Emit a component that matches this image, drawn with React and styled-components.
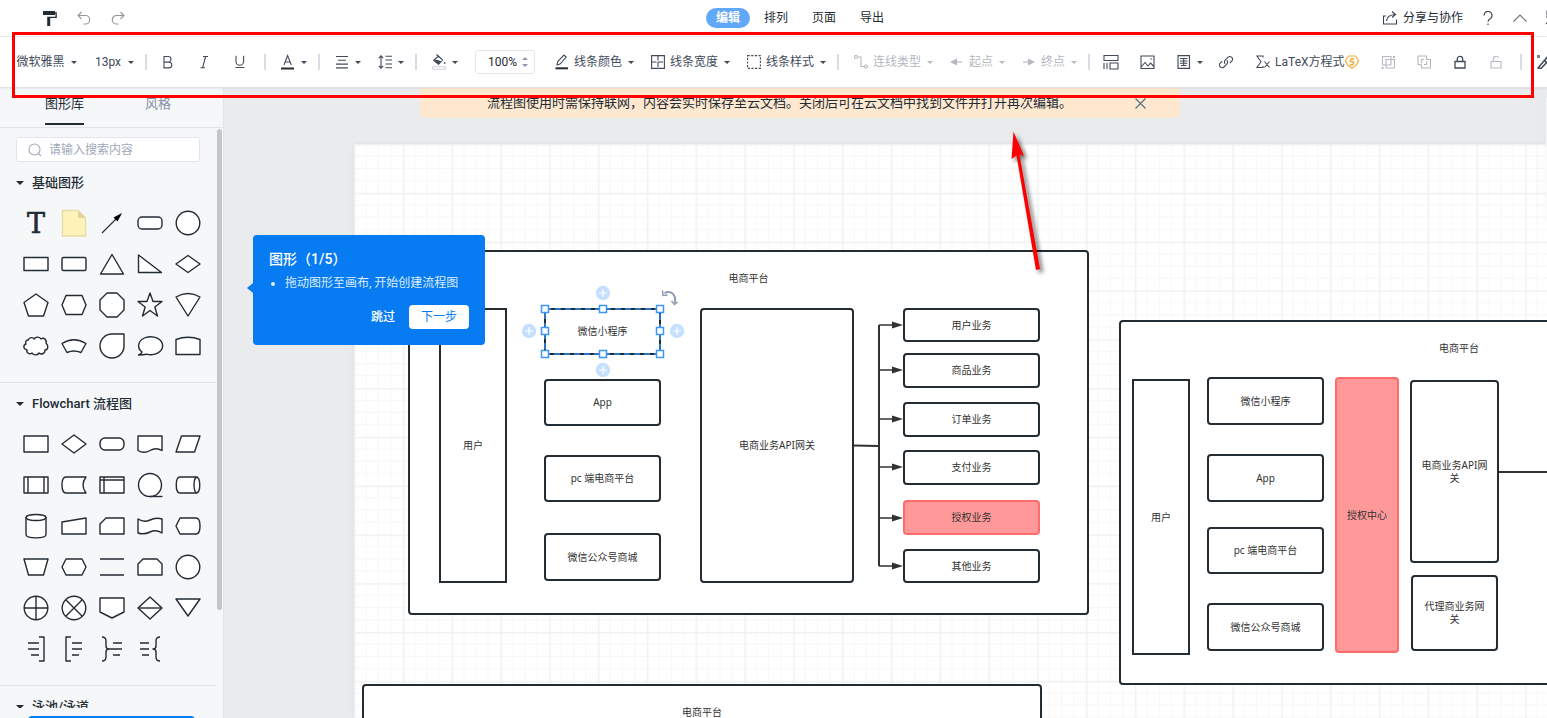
import React, { useState } from 'react'
import styled, { createGlobalStyle, css } from 'styled-components'

const GlobalStyle = createGlobalStyle`
  * {
    box-sizing: border-box;
  }
  body {
    margin: 0;
    overflow: hidden;
    background: #fff;
    color: #232b33;
    font: 12px/20px Roboto, 'Noto Sans CJK SC', sans-serif;
  }
  button, input, select {
    margin: 0;
    padding: 0;
    border: none;
    background: none;
    color: inherit;
    font: inherit;
  }
  button {
    cursor: pointer;
  }
  svg {
    display: block;
    flex: none;
  }
`

/* ---------- layout ---------- */

const Screen = styled.div`
  position: relative;
  display: flex;
  flex-direction: column;
  height: 100vh;
  overflow: hidden;
`
const Header = styled.header`
  display: flex;
  align-items: center;
  height: 37px;
  padding-left: 43px;
  border-bottom: 1px solid #ececef;
`
const HeaderLeft = styled.div`
  display: flex;
  flex: 1 1 0;
  align-items: center;
  gap: 20px;
`
const HeaderRight = styled.div`
  display: flex;
  flex: 1 1 0;
  align-items: center;
  justify-content: flex-end;
  gap: 18px;
  margin-right: -14px;
`
const MenuTabs = styled.nav`
  display: flex;
  gap: 4px;
  margin: 0 14px 0 10px;
`
const MenuTab = styled.button`
  width: 44px;
  height: 20px;
  border-radius: 10px;
  ${props => props.$active && css`
    background: #62a8f8;
    color: #fff;
    font-weight: 700;
  `}
`
const HeaderButton = styled.button`
  display: flex;
  align-items: center;
  gap: 5px;
`
const Toolbar = styled.div`
  position: relative;
  z-index: 2;
  display: flex;
  flex: none;
  align-items: center;
  height: 51px;
  padding-left: 8px;
  border-bottom: 1px solid #dfe2e5;
  background: #fff;
  color: #414a5a;
  white-space: nowrap;
  box-shadow: 0 1px 2px rgba(0, 0, 0, 0.06);
`
const Body = styled.div`
  display: flex;
  flex: 1;
  min-height: 0;
`

/* ---------- toolbar parts ---------- */

const toolStyles = css`
  display: flex;
  flex: none;
  align-items: center;
  gap: 5px;
  height: 28px;
  padding: 0 9px 0 8px;
  color: ${props => (props.$muted ? '#b4b8bf' : 'inherit')};
`
const Tool = styled.button`
  ${toolStyles}
`
const SelectTool = styled.label`
  ${toolStyles}
`
const NativeSelect = styled.select`
  min-width: ${props => props.$min}px;
  appearance: none;
  text-align: center;
  outline: none;
`
const IconButton = styled.button`
  display: flex;
  flex: none;
  align-items: center;
  justify-content: center;
  width: 28px;
  height: 28px;
  margin-right: 8px;
  color: ${props => (props.$muted ? '#b4b8bf' : 'inherit')};
`
const Separator = styled.span`
  flex: none;
  width: 2px;
  height: 16px;
  margin: 0 7px 0 2px;
  background: #d9dde3;
`
const Arrow = styled.i`
  flex: none;
  margin-left: 1px;
  border: 3px solid transparent;
  border-top-color: currentColor;
  border-bottom: none;
`
const ZoomBox = styled.label`
  display: flex;
  flex: none;
  align-items: center;
  justify-content: flex-end;
  gap: 5px;
  width: 60px;
  height: 24px;
  margin: 0 12px 0 8px;
  padding-right: 6px;
  border: 1px solid #e3e6ec;
  border-radius: 3px;
  color: #232b33;
`
const ZoomInput = styled.input`
  width: 36px;
  text-align: right;
  outline: none;
`
const LatexLabel = styled.span`
  display: flex;
  align-items: center;
  margin-right: 6px;
`

/* ---------- sidebar ---------- */

const Sidebar = styled.aside`
  display: flex;
  flex: none;
  flex-direction: column;
  width: 224px;
  border-right: 1px solid #e1e4e8;
  background: #f5f7f9;
`
const SideTabs = styled.div`
  display: flex;
  gap: 61px;
  height: 40px;
  padding: 0 45px;
  border-bottom: 1px solid #dfe3e8;
`
const SideTab = styled.button`
  height: 37px;
  padding-bottom: 4px;
  border-bottom: 2px solid ${props => (props.$active ? '#232b33' : 'transparent')};
  color: ${props => (props.$active ? '#232b33' : '#8592a6')};
  font-size: 13px;
`
const ShapeList = styled.div`
  position: relative;
  flex: 1;
  min-height: 0;
  padding-right: 7px;
  overflow: hidden;
`
const ScrollThumb = styled.div`
  position: absolute;
  top: 1px;
  right: 1px;
  width: 5px;
  height: 83%;
  border-radius: 3px;
  background: #c6c6c6;
`
const SearchBox = styled.label`
  display: flex;
  align-items: center;
  gap: 7px;
  height: 25px;
  margin: 9px 16px 0;
  padding: 0 11px;
  border: 1px solid #e1e6ee;
  border-radius: 3px;
  background: #fff;
  color: #a0a9ba;
`
const SearchInput = styled.input`
  flex: 1;
  min-width: 0;
  outline: none;
  &::placeholder {
    color: #a0a9ba;
  }
`
const Section = styled.section`
  padding: 11px 0 16px;
  border-bottom: 1px solid #dfe2e7;
`
const SectionTitle = styled.button`
  display: flex;
  align-items: center;
  gap: 8px;
  height: 20px;
  margin-left: 16px;
  font-size: 13px;
  font-weight: 500;
`
const SectionArrow = styled.i`
  border: 4px solid transparent;
  border-top-color: #232b33;
  border-bottom: none;
`
const ShapeGrid = styled.div`
  display: grid;
  grid-template-columns: repeat(5, 38px);
  grid-auto-rows: 41px;
  margin: 9px 0 0 17px;
`
const ShapeButton = styled.button`
  display: flex;
  align-items: center;
  justify-content: center;
`
const ShapeSvg = styled.svg`
  overflow: visible;
`
const SideFooter = styled.div`
  flex: none;
  height: 10px;
  padding: 8px 28px 0;
  overflow: hidden;
`
const MoreButton = styled.button`
  display: block;
  width: 100%;
  height: 28px;
  border-radius: 4px;
  background: #077bf1;
`

/* ---------- workspace ---------- */

const Workspace = styled.main`
  position: relative;
  flex: 1;
  min-width: 0;
  padding: 56px 0 0 130px;
  background: #e9ebed;
  overflow: hidden;
`
const Page = styled.div`
  position: relative;
  height: 100%;
  background: #fff;
  box-shadow: 0 0 5px rgba(0, 0, 0, 0.06);
`
const Overlay = styled.svg`
  position: absolute;
  top: 0;
  left: 0;
  width: 100%;
  height: 100%;
  pointer-events: none;
`
const Node = styled.div`
  position: absolute;
  left: ${props => props.$x}px;
  top: ${props => props.$y}px;
  display: flex;
  align-items: ${props => (props.$frame ? 'flex-start' : 'center')};
  justify-content: center;
  width: ${props => props.$w}px;
  height: ${props => props.$h}px;
  padding: ${props => (props.$frame ? '20px 0 0' : '0 8px')};
  border: 2px solid ${props => (props.$red ? '#ff6a6a' : '#232b33')};
  border-radius: ${props => (props.$square ? 0 : 4)}px;
  background: ${props => (props.$red ? '#ff9999' : '#fff')};
  color: #323232;
  font: 10px/13px 'Noto Sans', 'Noto Sans CJK SC', sans-serif;
  text-align: center;
`
const Banner = styled.div`
  position: absolute;
  top: 0;
  left: 196px;
  display: flex;
  align-items: center;
  justify-content: space-between;
  width: 760px;
  height: 30px;
  padding: 0 34px 0 67px;
  border-radius: 0 0 4px 4px;
  background: #fee8d0;
  font-size: 13px;
  white-space: nowrap;
`
const CloseButton = styled.button`
  color: #4b7080;
`
const Dock = styled.div`
  position: absolute;
  top: 10px;
  right: 0;
  width: 1px;
  height: 122px;
  background: #f8f9fb;
  box-shadow: 0 0 14px rgba(60, 70, 110, 0.18);
`
const Guide = styled.div`
  position: absolute;
  top: 147px;
  left: 29px;
  width: 232px;
  height: 110px;
  padding: 14px 16px 16px;
  border-radius: 4px;
  background: #077bf1;
  color: #fff;
  &::before {
    content: '';
    position: absolute;
    top: 48px;
    left: -6px;
    border: 5px solid transparent;
    border-right: 6px solid #077bf1;
    border-left: none;
  }
`
const GuideTitle = styled.h2`
  margin: 0;
  font-size: 14px;
  font-weight: 500;
  line-height: 20px;
`
const GuideList = styled.ul`
  margin: 4px 0 12px;
  padding-left: 16px;
  color: #dcecfd;
`
const GuideActions = styled.div`
  display: flex;
  justify-content: flex-end;
  gap: 14px;
`
const SkipButton = styled.button`
  font-weight: 500;
`
const NextButton = styled.button`
  width: 60px;
  height: 24px;
  border-radius: 4px;
  background: #fff;
  color: #077bf1;
`

/* ---------- markup over the screen ---------- */

const MarkFrame = styled.div`
  position: absolute;
  z-index: 3;
  top: 32px;
  right: 13px;
  left: 12px;
  height: 66px;
  border: 3px solid #ff0000;
  pointer-events: none;
`
const MarkArrow = styled.svg`
  position: absolute;
  z-index: 3;
  top: 120px;
  left: 1000px;
  pointer-events: none;
  filter: drop-shadow(3px 3px 2px rgba(0, 0, 0, 0.55));
`

const Icon = ({ size = 14, children, ...rest }) => (
  <svg
    width={size}
    height={size}
    viewBox={`0 0 ${size} ${size}`}
    fill="none"
    stroke="currentColor"
    strokeWidth="1.1"
    aria-hidden="true"
    {...rest}
  >
    {children}
  </svg>
)

const icons = {
  bold: <path d="M3 1.5h4.2a2.8 2.8 0 0 1 0 5.6H3zM3 7.1h4.9a2.9 2.9 0 0 1 0 5.8H3z" />,
  italic: <path d="M6 1.5h5M3.5 12.8h4.500M8.600 1.500l-3 11.300" />,
  underline: <path d="M3 .8v5.700a3.800 3.800 0 0 0 7.600 0V.8M2.500 12.500h8.800" />,
  align: <path d="M1 1.500h12M3 5.300h8M1 9.100h12M1 12.900h12" />,
  layout: <path d="M1 1.500h14v5H1zM1 9v6M4 9v6M7 9h8v6H7z" />,
  image: <path d="M1 1h13v12.500H1zM1.500 11.500l3.500-4 3 3.500 2.500-3 3.500 3.500M10.500 4h1.500" />,
  link: (
    <path d="M6.200 8.800a2.600 2.600 0 0 1 0-3.700l2.900-2.900a2.700 2.700 0 0 1 3.800 3.800l-2 2M7.800 5.400a2.600 2.600 0 0 1 0 3.700l-2.900 2.900a2.700 2.700 0 0 1-3.800-3.800l2-2" />
  ),
  group: (
    <>
      <path d="M1.500 1.500h8.500v8.500H1.500zM5 4.500h8.500V13H5z" />
      <path d="M12 1h2v2h-2zM.500 12h2v2h-2z" fill="currentColor" stroke="none" />
    </>
  ),
  ungroup: <path d="M4.500 9.500H1V1h8.500v3.500M4.500 8V4.500H7M9 4.500h4.500V13h-9v-3M9.500 6.500v3H7" />,
  lock: <path d="M2 6.500h10V13H2zM4.300 6.500V4a2.700 2.700 0 0 1 5.400 0v2.500" strokeWidth="1.3" />,
  unlock: <path d="M2 6.500h10V13H2zM4.300 6.500V4a2.700 2.700 0 0 1 5.200-1" />
}

const stroke = { fill: '#fff', stroke: '#232b33', strokeWidth: 1.4, strokeLinejoin: 'round' }

// every shape is drawn around its own centre
const basicShapes = [
  ['文本', <text y="10" textAnchor="middle" fontFamily="DejaVu Serif" fontSize="27" fill="#232b33" strokeWidth="0.6">T</text>],
  ['便签', <><path d="M-11.500-12.500H4L11.500-5v18h-23z" fill="#fff3b9" stroke="#e8dca6" /><path d="M4-12.500V-5h7.500z" fill="#e3d39a" stroke="none" /></>],
  ['箭头', <><path d="M-10 10L5-5" strokeWidth="1.1" /><path d="M10-10L1.500-5.500L5.500-1.500z" fill="#000" stroke="none" /></>],
  ['圆角矩形', <rect x="-12" y="-6" width="24" height="12" rx="4" />],
  ['圆形', <circle r="11.8" />],
  ['矩形', <rect x="-12" y="-6.5" width="24" height="13" />],
  ['圆角矩形 2', <rect x="-12" y="-6.5" width="24" height="13" rx="1.5" />],
  ['三角形', <path d="M0-9.500L11.500 10h-23z" />],
  ['直角三角形', <path d="M-11.500-9V8.500h23z" />],
  ['菱形', <path d="M-12 0L0-8.500L12 0L0 8.500z" />],
  ['五边形', <path d="M0-11L12-2.500L7.500 11h-15L-12-2.500z" />],
  ['六边形', <path d="M-12 0l4-9.500H8L12 0L8 9.500H-8z" />],
  ['八边形', <path d="M-5-12H5L12-5V5L5 12H-5L-12 5V-5z" />],
  ['五角星', <path d="M0-12L3-3.500H12L4.800 2L7.500 11L0 5.500L-7.500 11L-4.800 2L-12-3.500H-3z" />],
  ['扇形', <path d="M-12-8Q0-15 12-8L0 11z" />],
  ['云形', <path d="M-8-6C-6-9-3-9-2-7C0-10 4-9 5-7C8-9 11-6 10-3C13 0 12 4 9 4C9 8 5 9 3 7C1 10-3 9-4 7C-7 9-10 6-9 4C-13 3-13-1-10-2C-11-4-10-6-8-6z" />],
  ['扇环', <path d="M-12-2.500Q0-10 12-2.500L7 6.500Q0 3.500-7 6.500z" />],
  ['水滴', <path d="M0-12H12V0A12 12 0 1 1 0-12z" />],
  ['气泡', <path d="M-8 6A12 9 0 1 1-3.500 8.200Q-7 9-11.500 9Q-8.500 8-8 6z" />],
  ['拱形', <path d="M-12-6.500Q0-11 12-6.500V8.500h-24z" />]
]

const flowShapes = [
  ['流程', <rect x="-12" y="-8" width="24" height="16" />],
  ['判定', <path d="M-12 0L0-9L12 0L0 9z" />],
  ['开始/结束', <rect x="-12" y="-6" width="24" height="12" rx="5" />],
  ['文档', <path d="M-12-8h24V6.500Q6 3 0 6.500T-12 6.500z" />],
  ['数据', <path d="M-6.500-8H12L6.500 8H-12z" />],
  ['子流程', <><rect x="-12" y="-8" width="24" height="16" /><path d="M-8-8V8M8-8V8" /></>],
  ['外部数据', <path d="M12-8H-8Q-12-8-12 0T-8 8H12Q9 4 9 0T12-8z" />],
  ['内部存储', <><rect x="-12" y="-8" width="24" height="16" /><path d="M-8-8V8M-12-5H12" /></>],
  ['队列数据', <><circle r="11.5" /><path d="M0 11.500H12.500" /></>],
  ['直接数据', <><path d="M8-8H-8C-13-8-13 8-8 8H8C13 8 13-8 8-8z" /><path d="M9-8C5-7 5 7 9 8" /></>],
  ['数据库', <><path d="M-10-8.500V8.500C-10 13 10 13 10 8.500V-8.500z" /><ellipse cy="-8.5" rx="10" ry="3" /></>],
  ['人工输入', <path d="M-12-4L12-8V8h-24z" />],
  ['卡片', <path d="M-6-8H12V8H-12V-2z" />],
  ['条带', <path d="M-12-7Q-6-3 0-6T12-7V7Q6 3 0 6T-12 7z" />],
  ['展示', <path d="M-8-8H8Q12-8 12 0T8 8H-8L-12 0z" />],
  ['人工操作', <path d="M-12-8H12L7.500 8H-7.500z" />],
  ['准备', <path d="M-12 0L-8-8H8L12 0L8 8H-8z" />],
  ['并行模式', <path d="M-12-8H12M-12 8H12" />],
  ['循环限值', <path d="M-12 8V-3L-7-8H7L12-3V8z" />],
  ['页面内引用', <circle r="11.8" />],
  ['或者', <><circle r="11.8" /><path d="M-12 0H12M0-12V12" /></>],
  ['总结', <><circle r="11.8" /><path d="M-8-8L8 8M8-8L-8 8" /></>],
  ['跨页引用', <path d="M-12-10H12V4L0 10L-12 4z" />],
  ['排序', <><path d="M-12 0L0-11L12 0L0 11z" /><path d="M-12 0H12" /></>],
  ['合并', <path d="M-12-9H12L0 8z" />],
  ['注释 1', <path d="M3-12H8V12H3M-8-6H3M-8 0H3M-5 6H3" fill="none" />],
  ['注释 2', <path d="M-3-12H-8V12H-3M-2-6H8M-2 0H8M-2 6H5" fill="none" />],
  ['注释 3', <path d="M-10-12Q-6-12-6-8V-3Q-6 0-3 0Q-6 0-6 3V8Q-6 12-10 12M1-6H10M-3 0H10M1 6H8" fill="none" />],
  ['注释 4', <path d="M10-12Q6-12 6-8V-3Q6 0 3 0Q6 0 6 3V8Q6 12 10 12M-10-6H-1M-10 0H-1M-8 6H-1" fill="none" />]
]

// positions are relative to the page's top left corner
const nodes = [
  { x: 54, y: 106, w: 681, h: 365, text: '电商平台', frame: true },
  { x: 85, y: 164, w: 68, h: 275, text: '用户', square: true },
  { x: 190, y: 164, w: 117, h: 47, text: '微信小程序', square: true },
  { x: 190, y: 235, w: 117, h: 47, text: 'App' },
  { x: 190, y: 311, w: 117, h: 47, text: 'pc 端电商平台' },
  { x: 190, y: 389, w: 117, h: 48, text: '微信公众号商城' },
  { x: 346, y: 164, w: 154, h: 275, text: '电商业务API网关' },
  { x: 549, y: 164, w: 137, h: 34, text: '用户业务' },
  { x: 549, y: 209, w: 137, h: 35, text: '商品业务' },
  { x: 549, y: 258, w: 137, h: 35, text: '订单业务' },
  { x: 549, y: 306, w: 137, h: 35, text: '支付业务' },
  { x: 549, y: 356, w: 137, h: 35, text: '授权业务', red: true },
  { x: 549, y: 405, w: 137, h: 34, text: '其他业务' },
  { x: 765, y: 176, w: 680, h: 365, text: '电商平台', frame: true },
  { x: 778, y: 235, w: 58, h: 276, text: '用户', square: true },
  { x: 853, y: 233, w: 117, h: 48, text: '微信小程序' },
  { x: 853, y: 310, w: 117, h: 48, text: 'App' },
  { x: 853, y: 383, w: 117, h: 47, text: 'pc 端电商平台' },
  { x: 853, y: 459, w: 117, h: 48, text: '微信公众号商城' },
  { x: 981, y: 233, w: 64, h: 276, text: '授权中心', red: true },
  { x: 1056, y: 236, w: 89, h: 183, text: '电商业务API网关' },
  { x: 1057, y: 431, w: 87, h: 76, text: '代理商业务网关' },
  { x: 8, y: 540, w: 680, h: 365, text: '电商平台', frame: true }
]

const branches = [181, 226, 275, 323, 374, 422]
const handles = [[191, 165], [249, 165], [306, 165], [191, 187], [306, 187], [191, 210], [249, 210], [306, 210]]
const adders = [[249, 149], [175, 187], [323, 187], [249, 226]]

const ShapeSection = ({ title, shapes }) => (
  <Section>
    <SectionTitle><SectionArrow />{title}</SectionTitle>
    {shapes && (
      <ShapeGrid>
        {shapes.map(([name, drawing]) => (
          <ShapeButton key={name} aria-label={name}>
            <ShapeSvg width="28" height="28" viewBox="-14 -14 28 28" {...stroke}>{drawing}</ShapeSvg>
          </ShapeButton>
        ))}
      </ShapeGrid>
    )}
  </Section>
)

const TopBar = () => {
  const [tab, setTab] = useState('编辑')

  return (
    <Header>
      <HeaderLeft>
        <HeaderButton aria-label="格式刷">
          <Icon viewBox="0 0 14 16" height="16" stroke="none" fill="#232b33">
            <path d="M0 1h12v1.300h1.800V8H7.200v8H4.200V6.700h8.300V3.500H12V5H0z" />
          </Icon>
        </HeaderButton>
        <HeaderButton aria-label="撤销">
          <Icon stroke="#92979e"><path d="M4.500 1L1 4.500L4.500 8M1 4.500h7.500a4 4 0 0 1 0 8.500H6.500" /></Icon>
        </HeaderButton>
        <HeaderButton aria-label="重做">
          <Icon stroke="#92979e"><path d="M9.500 1L13 4.500L9.500 8M13 4.500H5.500a4 4 0 0 0 0 8.500h2" /></Icon>
        </HeaderButton>
      </HeaderLeft>
      <MenuTabs>
        {['编辑', '排列', '页面', '导出'].map(name => (
          <MenuTab key={name} $active={name === tab} onClick={() => setTab(name)}>{name}</MenuTab>
        ))}
      </MenuTabs>
      <HeaderRight>
        <HeaderButton>
          <Icon size={16} stroke="#3a424c">
            <path d="M4 6H1.500v8h13V9.500M4.500 11Q5 5 13 4.500M10 1.500l3.500 3L10 7.500" />
          </Icon>
          分享与协作
        </HeaderButton>
        <HeaderButton aria-label="帮助">
          <Icon stroke="#3a424c" strokeWidth="1.2">
            <path d="M3 4.500a4 4 0 1 1 6.500 3Q7 9 7 10.800M7 12.400v1.500" />
          </Icon>
        </HeaderButton>
        <HeaderButton aria-label="收起">
          <Icon stroke="#6a7078"><path d="M.5 10.500L7 4L13.500 10.500" /></Icon>
        </HeaderButton>
        <HeaderButton aria-label="设置">
          <Icon size={16} stroke="#3a424c"><path d="M2 1h13v4H2zM1 7h14M7 7L1 14M5 10l9 4" /></Icon>
        </HeaderButton>
      </HeaderRight>
    </Header>
  )
}

const EditBar = () => {
  const [zoom, setZoom] = useState('100%')

  return (
    <Toolbar>
      <SelectTool>
        <NativeSelect $min={48} aria-label="字体"><option>微软雅黑</option></NativeSelect>
        <Arrow />
      </SelectTool>
      <SelectTool>
        <NativeSelect $min={28} aria-label="字号"><option>13px</option></NativeSelect>
        <Arrow />
      </SelectTool>
      <Separator />
      <IconButton aria-label="加粗"><Icon>{icons.bold}</Icon></IconButton>
      <IconButton aria-label="斜体"><Icon>{icons.italic}</Icon></IconButton>
      <IconButton aria-label="下划线"><Icon>{icons.underline}</Icon></IconButton>
      <Separator />
      <Tool aria-label="文字颜色">
        <Icon viewBox="0 0 14 16" height="16">
          <path d="M3 11L6.600 1.500L10.300 11M4.200 8h4.800" />
          <path d="M0 14.500h13" stroke="#232b33" strokeWidth="2" />
        </Icon>
        <Arrow />
      </Tool>
      <Separator />
      <Tool aria-label="对齐"><Icon>{icons.align}</Icon><Arrow /></Tool>
      <Tool aria-label="行高">
        <Icon>
          <path d="M3 1v12M.8 3.200L3 .8L5.200 3.200M.8 10.800L3 13.200L5.200 10.800M7.500 1.200H14M7.500 5h6.500M7.500 9h6.500M7.500 12.800H14" />
        </Icon>
        <Arrow />
      </Tool>
      <Separator />
      <Tool aria-label="填充">
        <Icon viewBox="0 0 14 16" height="16">
          <path d="M1.500 6.500L6.500 2L11 6.500M4.500.5l3 3" />
          <path d="M1 6.500Q4 5 7 6.500T11.500 6L6.500 11zM12.700 7.500l1 2.200h-2z" fill="currentColor" stroke="none" />
          <path d="M.5 12.800h13v2.500H.5z" stroke="#cdd1d6" strokeWidth="1" />
        </Icon>
        <Arrow />
      </Tool>
      <ZoomBox>
        <ZoomInput aria-label="缩放" value={zoom} onChange={e => setZoom(e.target.value)} />
        <Icon viewBox="0 0 6 12" width="6" height="12" fill="#8d99ad" stroke="none">
          <path d="M0 4L3 1L6 4zM0 8L3 11L6 8z" />
        </Icon>
      </ZoomBox>
      <Tool>
        <Icon viewBox="0 0 14 16" height="16">
          <path d="M2 11l.7-3.500L9 1l2.200 2L5 10z" />
          <path d="M.5 14.300H13" stroke="#232b33" strokeWidth="2" />
        </Icon>
        线条颜色
        <Arrow />
      </Tool>
      <Tool>
        <Icon>
          <path d="M.6.6h12.800v12.800H.6z" />
          <path d="M7 .6v12.800M.6 7h12.800" strokeDasharray="5 1.500" />
        </Icon>
        线条宽度
        <Arrow />
      </Tool>
      <Tool>
        <Icon><path d="M.6.6h12.800v12.800H.6z" strokeDasharray="2.2 1.4" /></Icon>
        线条样式
        <Arrow />
      </Tool>
      <Separator />
      <Tool $muted>
        <Icon><circle cx="2" cy="2" r="1.5" /><circle cx="12" cy="11.5" r="1.5" /><path d="M3.500 2H7v9.500h3.500" /></Icon>
        连线类型
        <Arrow />
      </Tool>
      <Tool $muted>
        <Icon><path d="M6 7h6" /><path d="M0 7l7-3.500v7z" fill="currentColor" stroke="none" /></Icon>
        起点
        <Arrow />
      </Tool>
      <Tool $muted>
        <Icon><path d="M1 7h6" /><path d="M13 7L6 3.500v7z" fill="currentColor" stroke="none" /></Icon>
        终点
        <Arrow />
      </Tool>
      <Separator />
      <IconButton aria-label="布局"><Icon size={16}>{icons.layout}</Icon></IconButton>
      <IconButton aria-label="图片"><Icon size={15}>{icons.image}</Icon></IconButton>
      <Tool aria-label="表格">
        <Icon><path d="M1 .6h11.500v12.800H1zM3 3.500h7.500M3 6h7.500M3 8.300h7.500M4 10.500h5.500M6.700 3.500v7" /></Icon>
        <Arrow />
      </Tool>
      <IconButton aria-label="链接"><Icon>{icons.link}</Icon></IconButton>
      <Tool>
        <Icon><path d="M7 2.500V1H.8L5 6.800L.8 12.500H7V11M8.500 6.500l5 6M13.500 6.500l-5 6" /></Icon>
        <LatexLabel>
          LaTeX方程式
          <Icon stroke="#f4ae3d" strokeWidth="1.2">
            <path d="M3.500 1h7L13.500 5.500L12 9.500L7 13.300L2 9.500L.5 5.500z" />
            <path d="M9.300 4H6.200L5.200 6L8.800 7.500L7.800 9.800H4.800" strokeWidth="1.6" />
          </Icon>
        </LatexLabel>
      </Tool>
      <IconButton $muted aria-label="组合"><Icon>{icons.group}</Icon></IconButton>
      <IconButton $muted aria-label="取消组合"><Icon>{icons.ungroup}</Icon></IconButton>
      <IconButton aria-label="锁定"><Icon>{icons.lock}</Icon></IconButton>
      <IconButton $muted aria-label="解锁"><Icon>{icons.unlock}</Icon></IconButton>
      <Separator />
      <Tool aria-label="美化">
        <Icon strokeWidth="1.5">
          <path d="M1 13L10 2.500L13 4L4 13.500zM7.500 5.500L10 8" />
          <path d="M0 0h3v3H0zM11 10h3v3h-3z" fill="currentColor" stroke="none" opacity=".7" />
        </Icon>
      </Tool>
    </Toolbar>
  )
}

const Library = () => (
  <Sidebar>
    <SideTabs>
      <SideTab $active>图形库</SideTab>
      <SideTab>风格</SideTab>
    </SideTabs>
    <ShapeList>
      <SearchBox>
        <Icon><circle cx="6.5" cy="6.5" r="5.5" /><path d="M10.500 10.500L13 13" /></Icon>
        <SearchInput placeholder="请输入搜索内容" aria-label="搜索" />
      </SearchBox>
      <ShapeSection title="基础图形" shapes={basicShapes} />
      <ShapeSection title="Flowchart 流程图" shapes={flowShapes} />
      <ShapeSection title="泳池/泳道" />
      <ScrollThumb />
    </ShapeList>
    <SideFooter><MoreButton aria-label="更多图形" /></SideFooter>
  </Sidebar>
)

const Diagram = () => (
  <Page>
    <Overlay>
      <defs>
        <pattern id="grid" width="48.8" height="48.8" patternUnits="userSpaceOnUse">
          <path d="M12.200 0v48.800M24.400 0v48.800M36.600 0v48.800M0 12.200h48.800M0 24.400h48.800M0 36.600h48.800" stroke="#f6f6f6" />
          <path d="M0 0h48.800M0 0v48.800" stroke="#f1f1f1" strokeWidth="3" />
        </pattern>
      </defs>
      <rect width="100%" height="100%" fill="url(#grid)" />
    </Overlay>
    {nodes.map(node => (
      <Node
        key={`${node.x}-${node.y}`}
        $x={node.x}
        $y={node.y}
        $w={node.w}
        $h={node.h}
        $frame={node.frame}
        $square={node.square}
        $red={node.red}
      >
        {node.text}
      </Node>
    ))}
    <Overlay fill="none" stroke="#323232" strokeWidth="1.5">
      <path d="M500 301.500L525 302M525 181V422" strokeWidth="2" />
      {branches.map(y => (
        <g key={y}>
          <path d={`M525 ${y}h16`} />
          <path d={`M549 ${y}l-11 -3.500v7z`} fill="#323232" stroke="none" />
        </g>
      ))}
      <path d="M1145 328h60" strokeWidth="2" />
      <path d="M191 165H306V210H191z" stroke="#2f8ff5" strokeDasharray="6 4" />
      {handles.map(([x, y]) => (
        <rect key={`${x}-${y}`} x={x - 3.5} y={y - 3.5} width="7" height="7" fill="#fff" stroke="#3b97f7" />
      ))}
      {adders.map(([x, y]) => (
        <g key={`${x}-${y}`} transform={`translate(${x} ${y})`} stroke="#fff" strokeWidth="1.2">
          <circle r="7.2" fill="#c4e0fe" stroke="none" />
          <path d="M-4 0H4M0-4V4" />
        </g>
      ))}
      <path d="M310.500 149C317 146 322.500 150.500 321 159" stroke="#8f9aaf" strokeWidth="2" />
      <path d="M308.500 146.500l.5 5l4.500-.5M317.500 157l3 3.500l3-2.500" stroke="#8f9aaf" strokeWidth="1.5" />
    </Overlay>
  </Page>
)

const App = () => (
  <>
    <GlobalStyle />
    <Screen>
      <TopBar />
      <EditBar />
      <Body>
        <Library />
        <Workspace>
          <Diagram />
          <Banner>
            流程图使用时需保持联网，内容会实时保存至云文档。关闭后可在云文档中找到文件并打开再次编辑。
            <CloseButton aria-label="关闭">
              <Icon size={11}><path d="M.5.5l10 10M10.500.5L.5 10.500" /></Icon>
            </CloseButton>
          </Banner>
          <Dock />
          <Guide>
            <GuideTitle>图形（1/5）</GuideTitle>
            <GuideList><li>拖动图形至画布, 开始创建流程图</li></GuideList>
            <GuideActions>
              <SkipButton>跳过</SkipButton>
              <NextButton>下一步</NextButton>
            </GuideActions>
          </Guide>
        </Workspace>
      </Body>
      <MarkFrame />
      <MarkArrow width="60" height="160" fill="#ff0000">
        <path d="M13.500 11.500L24 36L19.500 34.500L40 149L36 150L16.500 35.500L11.500 39z" />
      </MarkArrow>
    </Screen>
  </>
)

export default App
